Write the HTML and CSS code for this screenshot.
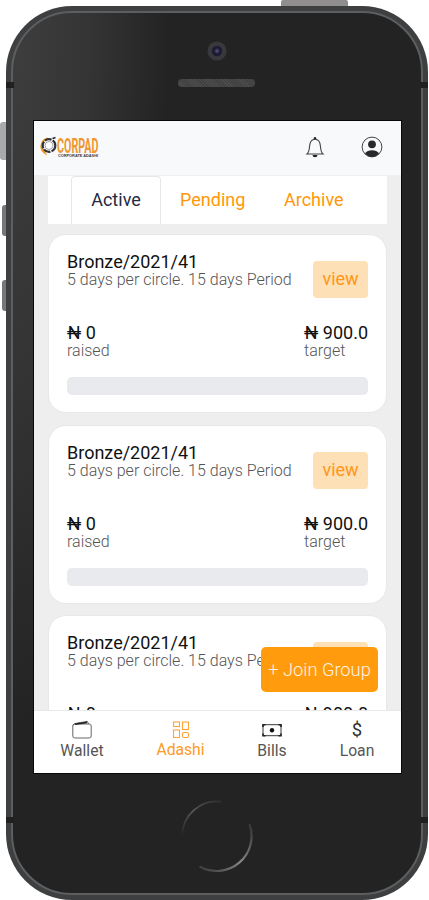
FILE: index.html
```html
<!DOCTYPE html>
<html lang="en">
<head>
<meta charset="utf-8">
<title>Corpad Adashi</title>
<link rel="stylesheet" href="styles.css">
</head>
<body>
<div class="stage">
  <i class="key power"></i><i class="key mute"></i><i class="key up"></i><i class="key down"></i>
  <div class="phone">
    <i class="band tl"></i><i class="band tr"></i><i class="band bl"></i><i class="band br"></i>
    <div class="face">
      <div class="forehead">
        <svg class="camera" width="20" height="20" viewBox="0 0 20 20"><circle cx="10" cy="10" r="9.600" fill="#39383c"/><circle cx="10" cy="10" r="5.200" fill="#1d1b33"/><circle cx="10" cy="10" r="2.400" fill="#393557"/><circle cx="10" cy="10" r="1" fill="#535274"/></svg>
        <div class="speaker"></div>
      </div>
      <div class="screen">
        <header class="header">
          <svg class="logo" width="62" height="26" viewBox="0 0 62 26">
            <path d="M8 3.500A8 8 0 0 0 5 18Q2 10 8 3.500" fill="#f29a20" stroke="#f29a20" stroke-width="2"/>
            <circle cx="9" cy="10.500" r="6.300" fill="#fff" stroke="#30323a" stroke-width="2.200" stroke-dasharray="7 1.200"/>
            <circle cx="9" cy="10.500" r="4" fill="none" stroke="#777b84" stroke-width=".7"/>
            <path d="M12.500 3.500l3-1" stroke="#25272c" stroke-width="1.500"/>
            <text class="brand" x="17" y="18" textLength="41.500" lengthAdjust="spacingAndGlyphs">CORPAD</text>
            <text class="tagline" x="18" y="21.900" textLength="40" lengthAdjust="spacingAndGlyphs">CORPORATE ADASHI</text>
          </svg>
          <svg class="bell" width="20" height="22" viewBox="0 0 20 22" fill="none" stroke="#444" stroke-width="1.100"><path d="M2 18h16c-1.800-1.500-2.300-4-2.600-8C15 6 13 3.300 10 3.300S5 6 4.600 10C4.300 14 3.800 16.500 2 18z"/><circle cx="10" cy="2.300" r="1.200" fill="#222" stroke="none"/><path d="M7.500 19h5a2.500 2.300 0 0 1-5 0z" fill="#222" stroke="none"/></svg>
          <svg class="user" width="22" height="22" viewBox="0 0 22 22"><circle cx="11" cy="11" r="9.900" fill="none" stroke="#444" stroke-width="1"/><circle cx="11" cy="8.300" r="3.900" fill="#292929"/><path d="M4 17.300C5.500 15 8 14.200 11 14.200s5.500.8 7 3.100C16.300 19.700 13.800 21 11 21s-5.300-1.300-7-3.700z" fill="#292929"/></svg>
        </header>
        <main class="content">
          <div class="tabs"><span class="tab active">Active</span><span class="tab pending">Pending</span><span class="tab archive">Archive</span></div>
          <section class="card">
            <div class="top"><div><h2>Bronze/2021/41</h2><p class="period">5 days per circle. 15 days Period</p></div><span class="view">view</span></div>
            <div class="amounts"><div><b class="raised">₦ 0</b><p>raised</p></div><div><b>₦ 900.0</b><p>target</p></div></div>
            <div class="bar"></div>
          </section>
          <section class="card">
            <div class="top"><div><h2>Bronze/2021/41</h2><p class="period">5 days per circle. 15 days Period</p></div><span class="view">view</span></div>
            <div class="amounts"><div><b class="raised">₦ 0</b><p>raised</p></div><div><b>₦ 900.0</b><p>target</p></div></div>
            <div class="bar"></div>
          </section>
          <section class="card">
            <div class="top"><div><h2>Bronze/2021/41</h2><p class="period">5 days per circle. 15 days Period</p></div><span class="view">view</span></div>
            <div class="amounts"><div><b class="raised">₦ 0</b><p>raised</p></div><div><b>₦ 900.0</b><p>target</p></div></div>
            <div class="bar"></div>
          </section>
          <div class="join"><span>+ Join Group</span></div>
        </main>
        <nav class="nav">
          <div class="item wallet"><svg width="20" height="20" viewBox="0 0 20 20" fill="none" stroke="#666" stroke-width="1"><rect x=".8" y="4" width="18.400" height="14" rx="2"/><path d="M1 5.500C1.500 3.500 4 3 15.500 1.500l1 2.500"/><path d="M3 4.200L15 2.400" stroke="#222" stroke-width="1.600"/></svg><span>Wallet</span></div>
          <div class="item adashi"><svg width="20" height="20" viewBox="0 0 20 20" fill="none" stroke="#ffa33c" stroke-width="1.100"><rect x="2.500" y="2" width="6" height="4.500"/><rect x="11.500" y="2" width="6" height="7.500"/><rect x="2.500" y="10" width="6" height="7.500"/><rect x="11.500" y="12.500" width="6" height="5" rx="1.500"/></svg><span>Adashi</span></div>
          <div class="item bills"><svg width="20" height="20" viewBox="0 0 20 20" fill="none" stroke="#222"><rect x="1" y="4.700" width="18" height="11" rx="1" stroke-width=".9"/><path d="M1 7V4.700h2.500M16.500 4.700H19V7M19 13.400v2.300h-2.500M3.500 15.700H1v-2.300" stroke-width="1.600"/><circle cx="10" cy="10.200" r="2.200" fill="#111" stroke="none"/></svg><span>Bills</span></div>
          <div class="item loan"><i class="dollar">$</i><span>Loan</span></div>
        </nav>
      </div>
      <svg class="home" width="74" height="74" viewBox="0 0 74 74" fill="none">
        <defs><linearGradient id="upper" x1="0" y1="1" x2="1" y2="0"><stop offset="0" stop-color="#252525"/><stop offset=".5" stop-color="#555"/><stop offset="1" stop-color="#303030"/></linearGradient><linearGradient id="lower" x1="1" y1="0" x2="0" y2="1"><stop offset="0" stop-color="#333"/><stop offset=".5" stop-color="#858585"/><stop offset="1" stop-color="#383838"/></linearGradient></defs>
        <path d="M2 36.500A35 35 0 0 1 41 2.700" stroke="url(#upper)" stroke-width="1.800"/><path d="M69.500 25A35 35 0 0 1 19.500 67.500" stroke="url(#lower)" stroke-width="2.200"/>
      </svg>
    </div>
  </div>
</div>
</body>
</html>
```
FILE: styles.css
```css
* { box-sizing: border-box; }
body { margin: 0; background: #fff; font-family: Roboto, sans-serif; overflow: hidden; }
h2, p { margin: 0; }
.stage { position: relative; width: 429px; height: 900px; padding: 6px 1px 0 6px; overflow: hidden; }
.key { position: absolute; background: #777; border-radius: 3px 0 0 3px; }
.power { left: 281px; top: 0; width: 67px; height: 12px; background: #918e8f; border-radius: 2px; }
.mute { left: 0; top: 122px; width: 8px; height: 38px; background: #aaa; }
.up { left: 2px; top: 205px; width: 6px; height: 31px; }
.down { left: 2px; top: 280px; width: 6px; height: 31px; }
.phone { position: relative; width: 422px; height: 894px; padding: 5px; border-radius: 66px; background: #3d3f40; }
.band { position: absolute; width: 8px; height: 6px; background: #202020; z-index: 1; }
.tl { left: 0; top: 76px; }
.tr { right: 0; top: 76px; }
.bl { left: 0; bottom: 77px; }
.br { right: 0; bottom: 77px; }
.face { height: 884px; border: 2px solid #5c5e5f; border-radius: 61px; background: radial-gradient(ellipse 155px 720px at 0 0, #3e3e3e 0, #343434 50%, #232323 100%), #232323; padding: 0 20px; display: flex; flex-direction: column; }
.forehead { height: 107px; flex: none; display: flex; flex-direction: column; align-items: center; padding: 28px 1px 0 0; }
.camera { flex: none; }
.speaker { width: 77px; height: 8px; margin-top: 18px; border-radius: 4px; background: repeating-linear-gradient(45deg, #4c4c4c 0 1px, #404040 1px 2px); }
.screen { width: 369px; height: 654px; flex: none; border: 1px solid #080808; background: #eeeeef; display: flex; flex-direction: column; }
.header { height: 54px; flex: none; display: flex; background: #f8f9fb; padding-left: 6px; }
.logo { margin-top: 14px; }
.bell { margin: 15px 0 0 203px; }
.user { margin: 15px 0 0 36px; }
.content { position: relative; height: 535px; padding: 1px 14px 0; overflow: hidden; }
.brand { font: 700 20.500px Roboto; fill: #ef9630; }
.tagline { font: 700 4px "Liberation Sans"; fill: #3c3a38; }
.tabs { height: 48px; display: flex; background: #fff; margin-bottom: 10px; font-size: 18px; line-height: 47px; color: #ff9708; }
.tab { display: block; white-space: nowrap; }
.active { width: 90px; margin-left: 23px; border: 1px solid #e5e7e9; border-bottom: 0; border-radius: 4px 4px 0 0; text-align: center; line-height: 45px; color: #252b43; }
.pending { margin-left: 19px; width: 104px; }
.card { height: 179px; margin-bottom: 11.500px; padding: 17px 18px 0; border: 1px solid #e8e8e9; border-radius: 18px; background: #fff; }
.top { height: 71px; display: flex; justify-content: space-between; }
h2 { font-size: 18px; font-weight: 400; line-height: 19px; color: #111; white-space: nowrap; }
p { font-size: 16px; font-weight: 300; line-height: 18px; color: #555; white-space: nowrap; }
.view { width: 55px; height: 37px; margin-top: 9px; border-radius: 4px; background: #fde0b5; color: #ff9619; font-size: 18px; line-height: 35px; text-align: center; }
.amounts { display: flex; justify-content: space-between; height: 54px; }
.amounts b { display: block; font-size: 18px; font-weight: 400; line-height: 19px; color: #111; }
.bar { height: 18px; border-radius: 5px; background: #e9eaed; }
.join { position: absolute; left: 227px; top: 472px; width: 117px; height: 45px; border-radius: 5px; background: #ff9b0d; color: #fff4e4; font-size: 18.300px; font-weight: 300; line-height: 45px; text-align: center; white-space: nowrap; }
.nav { height: 63px; flex: none; display: grid; grid-template-columns: 96px 101px 82px 88px; background: #fff; border-top: 1px solid #e8e8e9; }
.item { display: flex; flex-direction: column; align-items: center; padding-top: 9px; font-size: 15.700px; line-height: 20px; color: #555; }
.item span { margin-top: 1px; }
.adashi span { margin-top: 0; color: #ff9a25; }
.dollar { height: 20px; font-style: normal; font-size: 18.500px; color: #333; }
.home { margin: 25px 0 0 147px; flex: none; }
```
